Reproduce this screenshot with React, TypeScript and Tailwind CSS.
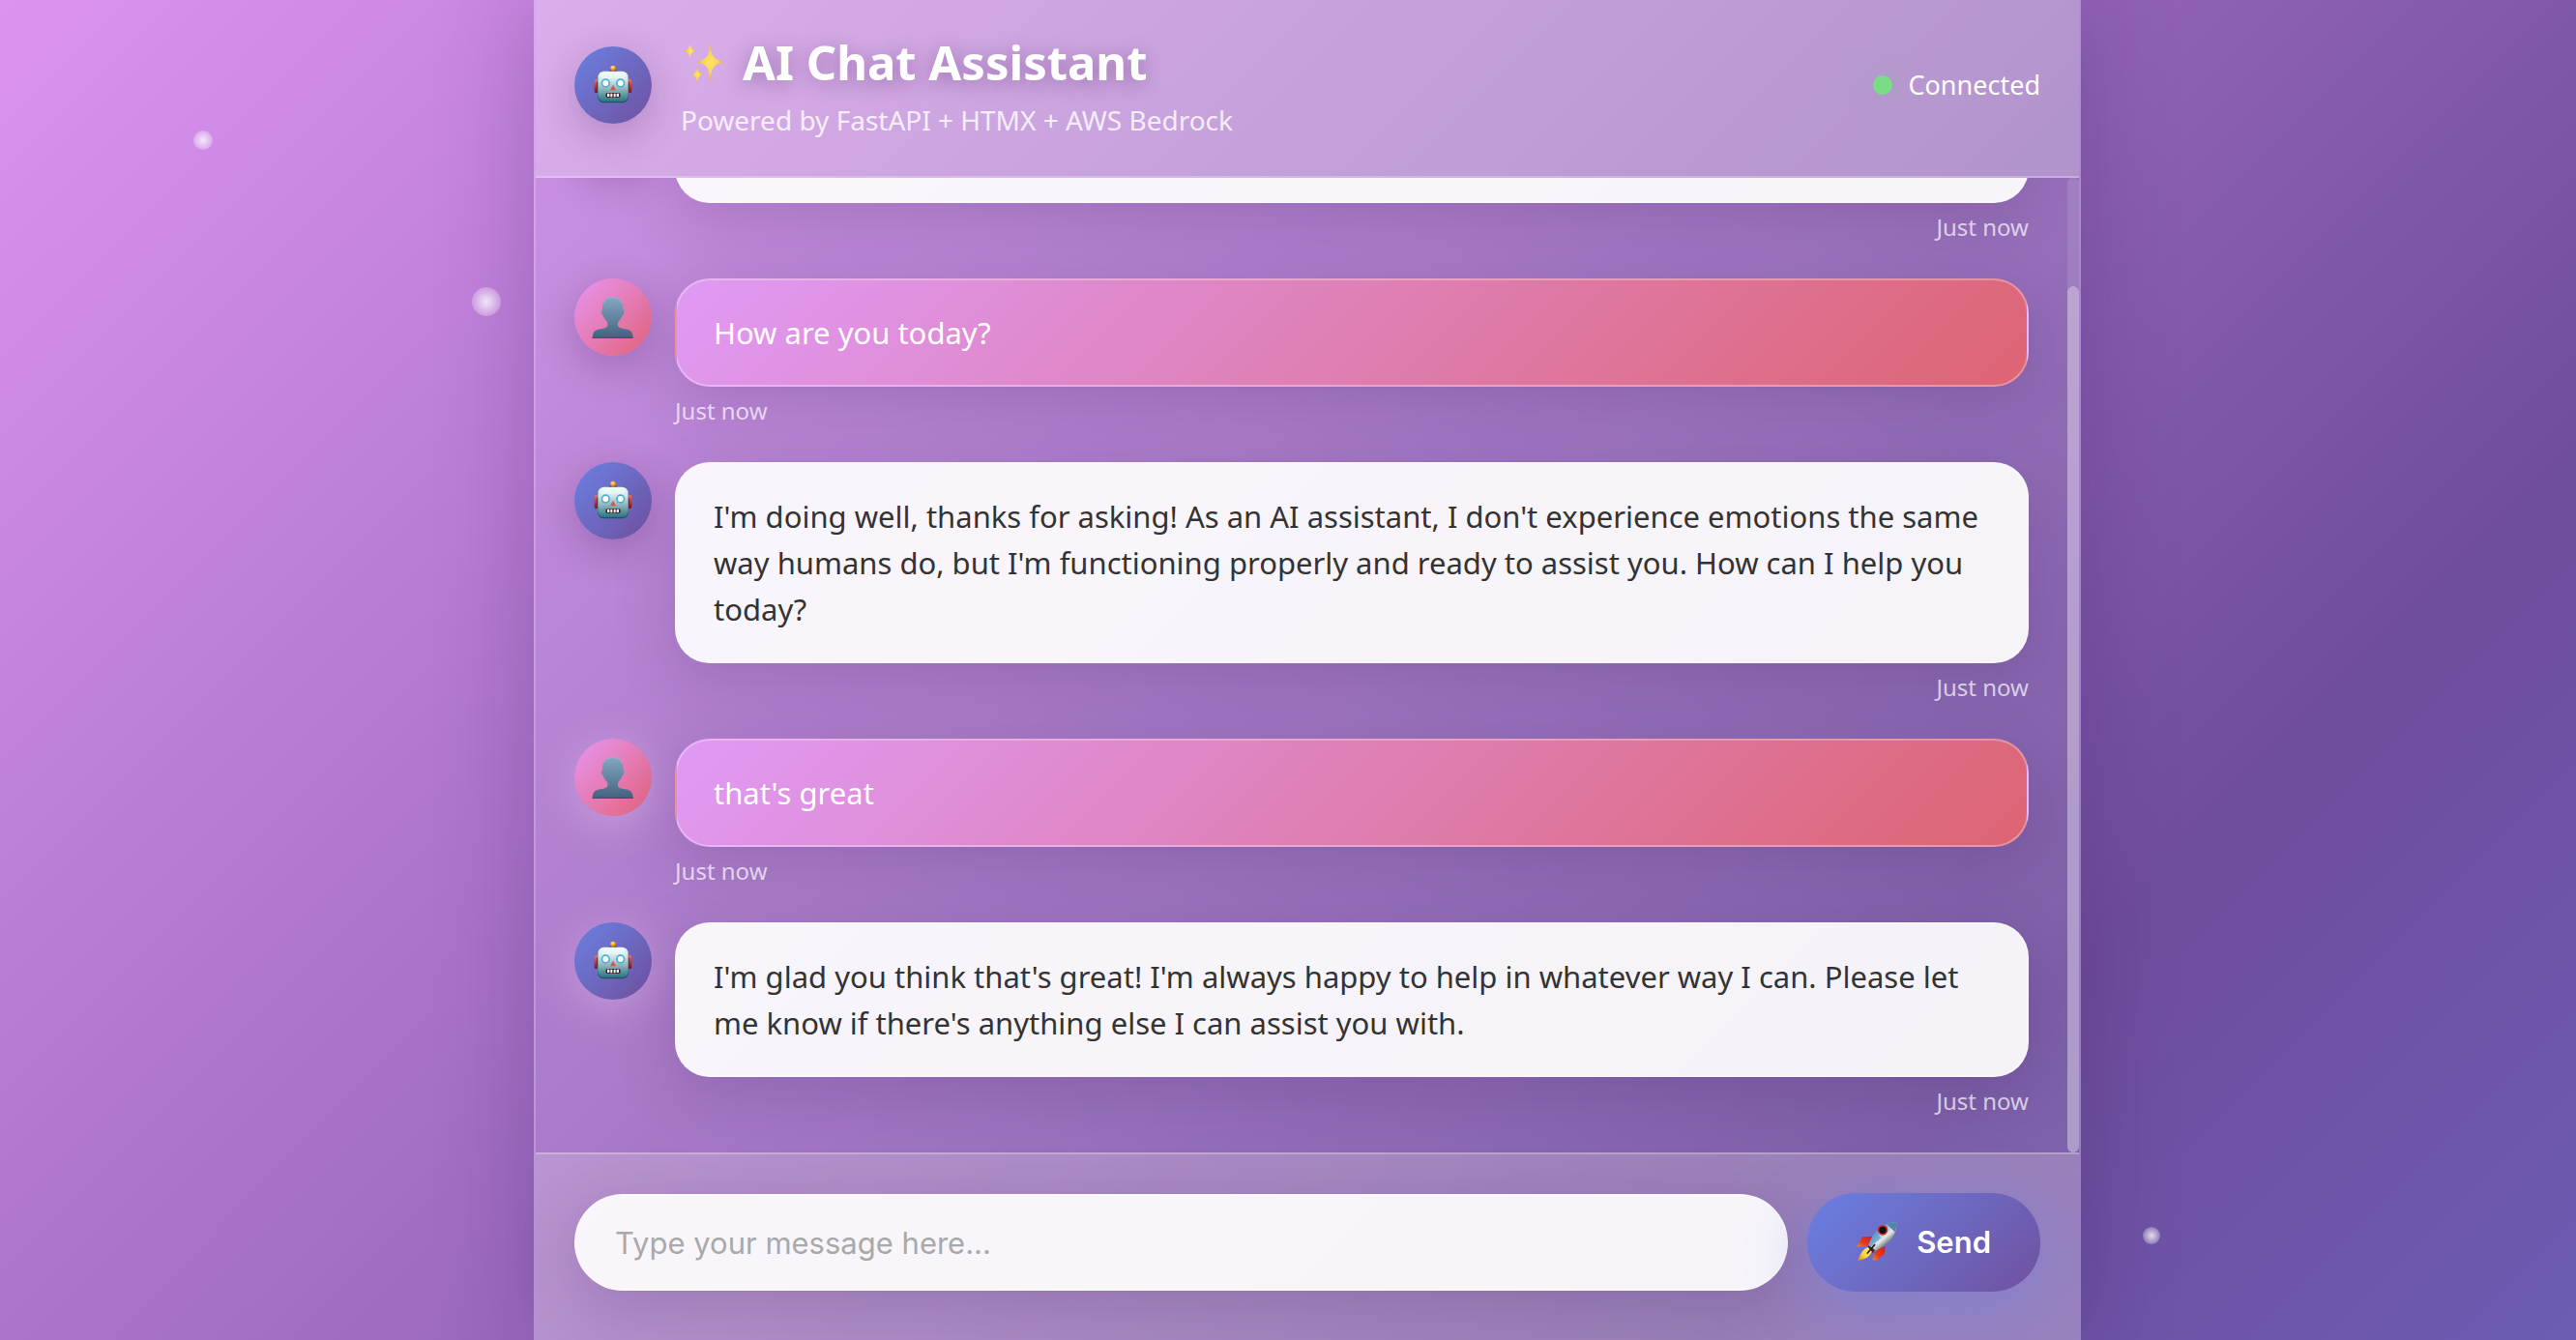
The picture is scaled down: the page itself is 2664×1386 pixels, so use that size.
import type { ReactNode } from "react";

function Robot() {
  return (
    <svg viewBox="0 0 168 168" className="size-14" aria-hidden="true">
      <defs>
        <linearGradient id="robotHead" x1="0" y1="0" x2="0" y2="1">
          <stop offset="0" stopColor="#e9fafa" />
          <stop offset="0.3" stopColor="#cfe6e8" />
          <stop offset="0.6" stopColor="#8fb4ba" />
          <stop offset="0.85" stopColor="#4b8e98" />
          <stop offset="1" stopColor="#2f7482" />
        </linearGradient>
        <radialGradient id="robotBulb" cx="0.45" cy="0.3" r="0.7">
          <stop offset="0" stopColor="#ffe9a0" />
          <stop offset="0.5" stopColor="#f5a623" />
          <stop offset="1" stopColor="#b55a10" />
        </radialGradient>
        <linearGradient id="robotEar" x1="0" y1="0" x2="0" y2="1">
          <stop offset="0" stopColor="#e8736a" />
          <stop offset="0.45" stopColor="#c93a3f" />
          <stop offset="1" stopColor="#6d1626" />
        </linearGradient>
      </defs>
      <path d="M71 44q0-9 13-9t13 9q-4 5-13 5t-13-5z" fill="#4c3a78" />
      <circle cx="84" cy="32" r="9" fill="url(#robotBulb)" />
      <rect x="26" y="66" width="12" height="42" rx="5" fill="url(#robotEar)" />
      <rect x="130" y="66" width="12" height="42" rx="5" fill="url(#robotEar)" />
      <rect x="34" y="74" width="6" height="26" fill="#2b3348" />
      <rect x="128" y="74" width="6" height="26" fill="#2b3348" />
      <rect x="36" y="42" width="96" height="97" rx="20" fill="#1f5563" />
      <rect x="37" y="41" width="94" height="94" rx="19" fill="url(#robotHead)" />
      <rect x="45" y="44" width="78" height="20" rx="10" fill="#fff" opacity="0.4" />
      <circle cx="61" cy="78" r="14" fill="#4cafd0" />
      <circle cx="107" cy="78" r="14" fill="#4cafd0" />
      <circle cx="61" cy="78" r="9" fill="#fff" />
      <circle cx="107" cy="78" r="9" fill="#fff" />
      <path d="M84 83l9 17H75z" fill="#d6554e" />
      <rect x="61" y="108" width="46" height="15" rx="6" fill="#3a2730" />
      <path d="M66 110h7v10h-7zM76 110h6v11h-6zM86 110h6v11h-6zM95 110h7v10h-7z" fill="#f3f3ee" />
    </svg>
  );
}

function Person() {
  return (
    <svg viewBox="48 48 168 168" className="size-14" aria-hidden="true">
      <defs>
        <linearGradient id="bust" x1="0" y1="0" x2="0" y2="1">
          <stop offset="0" stopColor="#86a7c1" />
          <stop offset="0.5" stopColor="#64859f" />
          <stop offset="1" stopColor="#44617f" />
        </linearGradient>
      </defs>
      <path
        d="M131 69c20 0 32 13 32 32 0 3 0 6 0 9 3 0 4 3 3 8-1 5-3 8-5 9-3 9-8 15-13 20-3 9-2 15 5 18 9 3 23 4 31 8 7 4 10 12 10 25H68c0-13 3-21 10-25 8-4 22-5 31-8 7-3 8-9 5-18-5-5-10-11-13-20-2-1-4-4-5-9-1-5 0-8 3-8 0-3 0-6 0-9 0-19 12-32 32-32z"
        fill="url(#bust)"
      />
      <path d="M102 88c4-11 14-17 29-17s25 6 29 17" fill="none" stroke="#b7c6db" strokeWidth="2" opacity="0.7" />
      <path d="M68 196h126" stroke="#38506b" strokeWidth="3" />
    </svg>
  );
}

function Sparkles() {
  return (
    <svg viewBox="704 41 46 46" className="size-[46px] shrink-0" aria-hidden="true">
      <defs>
        <radialGradient id="spark" cx="0.5" cy="0.5" r="0.5">
          <stop offset="0" stopColor="#fde66a" />
          <stop offset="0.5" stopColor="#f9d453" />
          <stop offset="1" stopColor="#eba745" />
        </radialGradient>
      </defs>
      <g fill="url(#spark)">
        <path d="M734.500 44C735.500 58 737 61.500 750 64C737 66.500 735.500 70 734.500 86C733.500 70 732 66.500 719 64C732 61.500 733.500 58 734.500 44z" />
        <path d="M713.500 43C714.200 49.500 715 51.500 720.500 52.500C715 53.500 714.200 56 713.500 63C712.800 56 712 53.500 707.500 52.500C712 51.500 712.800 49.500 713.500 43z" />
        <path d="M721 68.500C721.700 74 722.500 76 728 77C722.500 78 721.700 80.500 721 86.500C720.300 80.500 719.500 78 715 77C719.500 76 720.300 74 721 68.500z" />
      </g>
    </svg>
  );
}

function Rocket() {
  return (
    <svg viewBox="24 20 126 126" className="size-[42px] shrink-0" aria-hidden="true">
      <defs>
        <linearGradient id="hull" x1="0.25" y1="0.25" x2="0.7" y2="0.8">
          <stop offset="0" stopColor="#3f7db3" />
          <stop offset="0.35" stopColor="#a9cbe2" />
          <stop offset="0.6" stopColor="#e6e9e4" />
          <stop offset="1" stopColor="#55606a" />
        </linearGradient>
        <linearGradient id="flame" x1="1" y1="0" x2="0" y2="1">
          <stop offset="0" stopColor="#fff27a" />
          <stop offset="0.6" stopColor="#fbd23a" />
          <stop offset="1" stopColor="#ee7c22" />
        </linearGradient>
        <linearGradient id="fin" x1="1" y1="0" x2="0" y2="1">
          <stop offset="0" stopColor="#c9201c" />
          <stop offset="0.6" stopColor="#e8391f" />
          <stop offset="1" stopColor="#f58a2c" />
        </linearGradient>
      </defs>
      <path d="M42 66l32-1-14 28-36 4z" fill="url(#fin)" />
      <path d="M84 103l29-8-3 25-25 19-12-2z" fill="url(#fin)" />
      <path d="M60 98c-14 5-21 14-32 41 22-3 37-11 44-29z" fill="url(#flame)" />
      <path d="M58 96l12-8 14 10-9 19z" fill="#4a2418" />
      <path d="M147 21c4 34-18 66-63 88L62 92C75 46 108 20 147 21z" fill="url(#hull)" />
      <path d="M118 27c9-5 19-6 29-6 1 10 0 20-4 30z" fill="#5285ad" />
      <path d="M62 92c5-18 13-31 23-43l14 20c-9 9-20 16-30 28z" fill="#5c9bcb" opacity="0.75" />
      <circle cx="105" cy="45" r="16" fill="#c5302c" />
      <circle cx="105" cy="45" r="11" fill="#150e12" />
      <path d="M58 116l22-25" stroke="#351710" strokeWidth="5" strokeLinecap="round" />
    </svg>
  );
}

type AvatarProps = { kind: "bot" | "user"; glow?: boolean };

function Avatar({ kind, glow }: AvatarProps) {
  const fill =
    kind === "bot"
      ? "bg-[linear-gradient(135deg,#6a80e2,#70519f)]"
      : "bg-[linear-gradient(135deg,#e795f0,#e4637a)]";
  const shadow = glow
    ? "shadow-[0_8px_50px_rgba(255,225,255,0.32)]"
    : "shadow-[0_12px_40px_rgba(60,20,80,0.24)]";
  return (
    <div className={`flex size-20 shrink-0 items-center justify-center rounded-full ${fill} ${shadow}`}>
      {kind === "bot" ? <Robot /> : <Person />}
    </div>
  );
}

type MessageProps = { kind: "bot" | "user"; glow?: boolean; children?: ReactNode };

function Message({ kind, glow, children }: MessageProps) {
  const bubble =
    kind === "bot"
      ? "border-white/30 bg-white/92 text-[#333333]"
      : "border-white/30 bg-[linear-gradient(135deg,#e09af5,#dd6472)] text-white";
  return (
    <li className="flex items-start gap-6">
      <Avatar kind={kind} glow={glow} />
      <div className="min-w-0 flex-1">
        <div
          className={`min-h-28 rounded-[36px] border-2 px-[38px] py-[30px] text-[31px] leading-[48px] shadow-[0_16px_64px_rgba(50,20,80,0.18)] ${bubble}`}
        >
          {children}
        </div>
        <p className={`mt-[10px] text-[24px] leading-[30px] text-white/70 ${kind === "bot" ? "text-right" : ""}`}>
          Just now
        </p>
      </div>
    </li>
  );
}

const orb =
  "absolute rounded-full bg-[radial-gradient(circle,rgba(255,255,255,0.8),rgba(255,255,255,0.25)_70%)]";

export default function App() {
  return (
    <div className="relative flex h-screen justify-center overflow-hidden bg-[linear-gradient(135deg,#dc93f0_0%,#6f4d9e_78%,#6c5cb2_100%)] pl-10 font-['Noto_Sans',sans-serif]">
      <span className={`${orb} top-[135px] left-[200px] size-5`} />
      <span className={`${orb} top-[297px] left-[488px] size-[30px]`} />
      <span className={`${orb} top-[1269px] left-[2216px] size-[18px]`} />

      <main className="flex w-full max-w-[1600px] flex-col border-x-2 border-white/20 bg-white/10 shadow-[0_0_90px_rgba(50,20,80,0.25)]">
        <header className="flex shrink-0 items-center justify-between border-b-2 border-white/25 bg-white/25 px-10 pt-8 pb-[38px]">
          <div className="flex items-center gap-[30px]">
            <Avatar kind="bot" />
            <div>
              <h1 className="flex items-center gap-[18px] text-[49px] leading-[64px] font-bold text-white text-shadow-[0_4px_20px_rgba(60,20,80,0.35)]">
                <Sparkles />
                AI Chat Assistant
              </h1>
              <p className="mt-2 text-[28px] leading-10 text-white/80">Powered by FastAPI + HTMX + AWS Bedrock</p>
            </div>
          </div>
          <div className="flex items-center gap-4 text-[27px] leading-10 text-white">
            <span className="size-5 rounded-full bg-[#7bdc88] shadow-[0_0_28px_rgba(123,190,136,0.45)]" />
            Connected
          </div>
        </header>

        <section className="flex min-h-0 flex-1" aria-label="Conversation">
          <ol className="flex min-w-0 flex-1 flex-col justify-end gap-[38px] overflow-hidden px-10 pb-[38px]">
            <Message kind="bot" />
            <Message kind="user">How are you today?</Message>
            <Message kind="bot">
              I'm doing well, thanks for asking! As an AI assistant, I don't experience emotions the same way humans do,
              but I'm functioning properly and ready to assist you. How can I help you today?
            </Message>
            <Message kind="user" glow>
              that's great
            </Message>
            <Message kind="bot" glow>
              I'm glad you think that's great! I'm always happy to help in whatever way I can. Please let me know if
              there's anything else I can assist you with.
            </Message>
          </ol>
          <div className="flex w-3 flex-col justify-end rounded-full bg-white/10">
            <div className="h-8/9 rounded-full bg-white/30" />
          </div>
        </section>

        <form
          className="flex shrink-0 items-center gap-5 border-t-2 border-white/25 bg-[rgba(235,225,235,0.25)] px-10 pt-10 pb-[50px] font-['Inter',sans-serif]"
          onSubmit={(e) => e.preventDefault()}
        >
          <input
            type="text"
            aria-label="Message"
            placeholder="Type your message here..."
            className="h-[100px] min-w-0 flex-1 rounded-[50px] border-2 border-white/30 bg-white/92 px-10 text-[31px] text-[#333333] shadow-[0_16px_64px_rgba(50,20,80,0.18)] outline-none placeholder:text-[#a9a9a9]"
          />
          <button
            type="submit"
            className="flex h-[102px] items-center gap-5 rounded-[50px] bg-[linear-gradient(135deg,#6a80e2,#70519f)] px-[51px] text-[31px] font-semibold text-white shadow-[0_16px_64px_rgba(102,126,234,0.45)]"
          >
            <Rocket />
            Send
          </button>
        </form>
      </main>
    </div>
  );
}
